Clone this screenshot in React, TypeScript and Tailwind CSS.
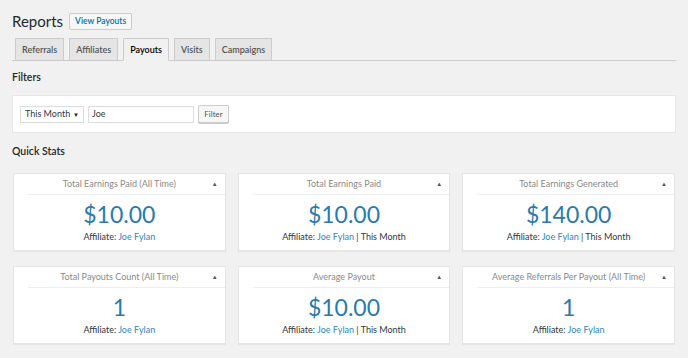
import React from "react";

const font = { fontFamily: 'Lato, "Open Sans", sans-serif' };

type Stat = { title: string; value: string; month?: boolean };

const row1: Stat[] = [
  { title: "Total Earnings Paid (All Time)", value: "$10.00" },
  { title: "Total Earnings Paid", value: "$10.00", month: true },
  { title: "Total Earnings Generated", value: "$140.00", month: true },
];
const row2: Stat[] = [
  { title: "Total Payouts Count (All Time)", value: "1" },
  { title: "Average Payout", value: "$10.00", month: true },
  { title: "Average Referrals Per Payout (All Time)", value: "1" },
];

function Card({ s }: { s: Stat }) {
  return (
    <div className="bg-white border border-[#e5e5e5] shadow-[0_1px_1px_rgba(0,0,0,0.04)] h-[78px] flex flex-col">
      <div className="flex items-center h-[20px]">
        <div className="w-[20px]" />
        <div className="flex-1 text-center text-[9px] text-[#8a8a8a] leading-[20px] whitespace-nowrap">{s.title}</div>
        <div className="w-[20px] text-center text-[6px] text-[#555] leading-[20px]">▲</div>
      </div>
      <div className="ml-[14px] h-px bg-[#eeeeee]" />
      <div className="flex flex-col items-center pt-[6px]">
        <div className="text-[23px] leading-[26px] text-[#2a7bab]">{s.value}</div>
        <div className="mt-[3px] text-[9px] leading-[14px] text-[#32373c] whitespace-nowrap">
          Affiliate: <span className="text-[#2e86c1]">Joe Fylan</span>
          {s.month ? " | This Month" : ""}
        </div>
      </div>
    </div>
  );
}

const tabs = ["Referrals", "Affiliates", "Payouts", "Visits", "Campaigns"];

export default function App() {
  return (
    <div style={font} className="min-h-[358px] w-[688px] bg-[#f1f1f1] px-[12px] pt-[13px] text-[#23282d]">
      <div className="flex items-center gap-[6px] h-[17px]">
        <div className="text-[15px] leading-[17px] text-[#23282d]">Reports</div>
        <div className="h-[17px] px-[5px] flex items-center border border-[#cccccc] bg-[#f7f7f7] rounded-[2px] text-[8.5px] font-semibold text-[#0073aa] whitespace-nowrap">
          View Payouts
        </div>
      </div>
      <div className="mt-[8px] flex items-end gap-[5px] pl-[3px] border-b border-[#cccccc] h-[23px]">
        {tabs.map((t) => {
          const active = t === "Payouts";
          return (
            <div
              key={t}
              className={
                active
                  ? "h-[23px] -mb-px px-[6px] flex items-center border border-[#cccccc] border-b-[#f1f1f1] bg-[#f1f1f1] text-[9px] font-semibold text-black"
                  : "h-[22px] px-[6px] flex items-center border border-b-0 border-[#cccccc] bg-[#e5e5e5] text-[9px] font-semibold text-[#555555]"
              }
            >
              {t}
            </div>
          );
        })}
      </div>
      <div className="mt-[8px] text-[10.5px] leading-[16px] font-semibold text-[#23282d]">Filters</div>
      <div className="mt-[10px] h-[38px] bg-white border border-[#e5e5e5] flex items-center gap-[4px] px-[7px]">
        <div className="w-[64px] h-[17px] border border-[#dddddd] bg-white flex items-center justify-between pl-[4px] pr-[4px] text-[9px] text-[#32373c] whitespace-nowrap">
          <span>This Month</span>
          <span className="text-[6px] text-[#222]">▼</span>
        </div>
        <div className="w-[106px] h-[17px] border border-[#dddddd] bg-white flex items-center pl-[3px] text-[9px] text-[#32373c]">
          Joe
        </div>
        <div className="w-[31px] h-[18px] border border-[#cccccc] bg-[#f7f7f7] rounded-[2px] flex items-center justify-center text-[8px] text-[#555555] shadow-[0_1px_0_#cccccc]">
          Filter
        </div>
      </div>
      <div className="mt-[10px] text-[10.5px] leading-[16px] font-semibold text-[#23282d]">Quick Stats</div>
      <div className="mt-[14px] grid grid-cols-3 gap-x-[12px] gap-y-[15px] pl-px pr-px">
        {[...row1, ...row2].map((s) => (
          <Card key={s.title} s={s} />
        ))}
      </div>
    </div>
  );
}
